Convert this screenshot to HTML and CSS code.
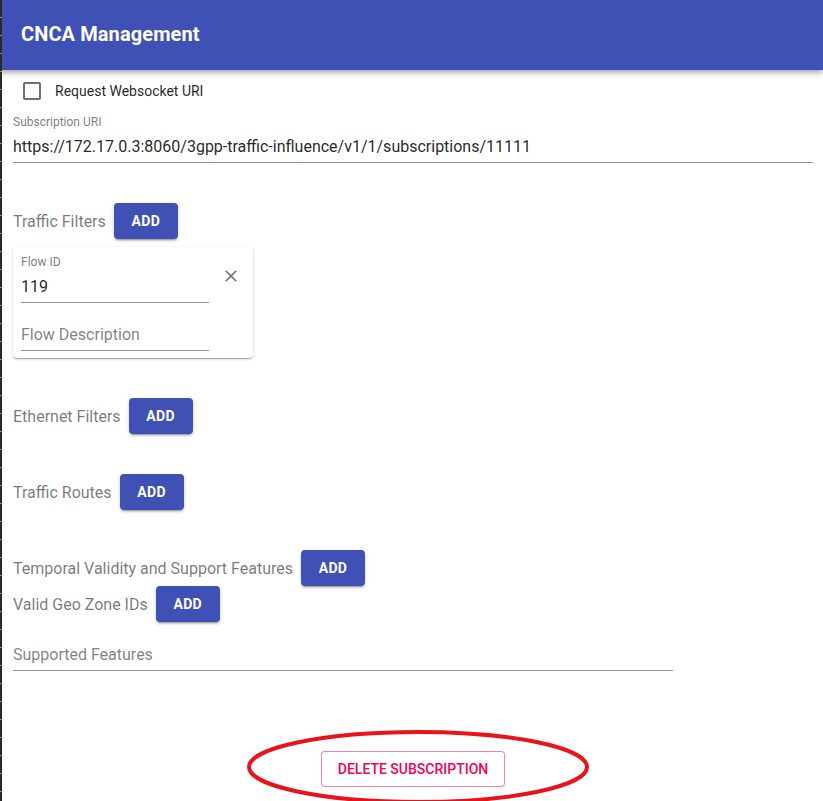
FILE: index.html
```html
<!DOCTYPE html>
<html>
<head>
<meta charset="utf-8">
<link rel="stylesheet" href="styles.css">
</head>
<body>
<div class="edge"></div>
<header class="appbar"><h1 class="title">CNCA Management</h1></header>
<main class="content">
  <label class="check-row">
    <span class="checkbox"></span>
    <span class="check-label">Request Websocket URI</span>
  </label>
  <div class="field field-full">
    <div class="field-label">Subscription URI</div>
    <div class="field-input">https://172.17.0.3:8060/3gpp-traffic-influence/v1/1/subscriptions/11111</div>
  </div>

  <div class="section-row first">
    <span class="section-label">Traffic Filters</span>
    <button class="btn-add">ADD</button>
  </div>
  <div class="card">
    <div class="card-fields">
      <div class="field field-card">
        <div class="field-label">Flow ID</div>
        <div class="field-input">119</div>
      </div>
      <div class="field field-card no-label card-desc">
        <div class="field-input placeholder">Flow Description</div>
      </div>
    </div>
    <svg class="close" viewBox="0 0 24 24" width="20" height="20"><path fill="#757575" d="M19 6.41 17.59 5 12 10.59 6.41 5 5 6.41 10.59 12 5 17.59 6.41 19 12 13.41 17.59 19 19 17.59 13.41 12z"/></svg>
  </div>

  <div class="section-row spaced">
    <span class="section-label">Ethernet Filters</span>
    <button class="btn-add">ADD</button>
  </div>
  <div class="section-row spaced">
    <span class="section-label">Traffic Routes</span>
    <button class="btn-add">ADD</button>
  </div>
  <div class="section-row spaced">
    <span class="section-label">Temporal Validity and Support Features</span>
    <button class="btn-add">ADD</button>
  </div>
  <div class="section-row">
    <span class="section-label">Valid Geo Zone IDs</span>
    <button class="btn-add">ADD</button>
  </div>
  <div class="field field-features no-label">
    <div class="field-input placeholder">Supported Features</div>
  </div>

  <div class="actions">
    <button class="btn-delete">DELETE SUBSCRIPTION</button>
  </div>
</main>
<svg class="ellipse" width="823" height="801" viewBox="0 0 823 801"><ellipse cx="418" cy="767" rx="169" ry="35" fill="none" stroke="#e8141b" stroke-width="4"/></svg>
</body>
</html>
```

FILE: styles.css
```css
* { box-sizing: border-box; }
html, body { margin: 0; padding: 0; }
body {
  width: 823px;
  height: 801px;
  overflow: hidden;
  background: #fff;
  font-family: Roboto, "Liberation Sans", sans-serif;
  color: rgba(0,0,0,0.87);
}
.edge {
  position: absolute;
  left: 0; top: 0;
  width: 2px; height: 801px;
  z-index: 5;
  background: repeating-linear-gradient(to bottom, #2a2a2a 0, #2a2a2a 17px, #8a8a8a 17px, #8a8a8a 18px);
}
.appbar {
  height: 70px;
  background: #3f51b5;
  display: flex;
  align-items: center;
  padding: 0 21px;
  box-shadow: 0 2px 4px -1px rgba(0,0,0,0.2), 0 4px 5px 0 rgba(0,0,0,0.14), 0 1px 10px 0 rgba(0,0,0,0.12);
  position: relative;
  z-index: 2;
}
.title {
  margin: 0;
  color: #fff;
  font-size: 20px;
  font-weight: 700;
  line-height: 1;
  letter-spacing: 0.1px;
  padding-bottom: 2px;
}
.content {
  padding: 0 10px 0 13px;
}
.check-row {
  display: flex;
  align-items: center;
  padding-top: 12px;
  height: 29px;
  padding-left: 10px;
}
.checkbox {
  width: 18px; height: 18px;
  border: 2px solid #707070;
  border-radius: 2px;
  flex: none;
}
.check-label {
  margin-left: 14px;
  font-size: 14px;
  line-height: 18px;
  color: rgba(0,0,0,0.87);
}
.field { display: flex; flex-direction: column; }
.field-label {
  font-size: 12px;
  line-height: 14px;
  color: rgba(0,0,0,0.54);
}
.field-input {
  font-size: 16px;
  line-height: 19px;
  padding: 6px 0 7px;
  border-bottom: 1px solid #949494;
  white-space: nowrap;
}
.placeholder { color: rgba(0,0,0,0.5); }
.field-full { margin-top: 16px; width: 800px; }
.field-full .field-input { padding-top: 8px; padding-bottom: 6px; }
.section-row {
  display: flex;
  align-items: center;
  height: 36px;
}
.section-row.first { margin-top: 40px; }
.section-row.spaced { margin-top: 40px; }
.section-label {
  font-size: 16px;
  color: rgba(0,0,0,0.54);
  margin-right: 8px;
}
.btn-add {
  width: 64px;
  height: 36px;
  border: 0;
  border-radius: 4px;
  background: #3f51b5;
  color: #fff;
  font-family: Roboto, "Liberation Sans", sans-serif;
  font-size: 14px;
  font-weight: 700;
  letter-spacing: 0.3px;
  box-shadow: 0 3px 1px -2px rgba(0,0,0,0.2), 0 2px 2px 0 rgba(0,0,0,0.14), 0 1px 5px 0 rgba(0,0,0,0.12);
  padding: 0;
}
.card {
  margin-top: 8px;
  width: 240px;
  height: 111px;
  border-radius: 4px;
  background: #fff;
  box-shadow: 0 1px 3px 0 rgba(0,0,0,0.2), 0 1px 1px 0 rgba(0,0,0,0.14), 0 2px 1px -1px rgba(0,0,0,0.12);
  display: flex;
  padding: 8px 0 0 8px;
}
.card-fields { width: 188px; }
.field-card .field-input { padding-top: 8px; padding-bottom: 6px; }
.no-label { padding-top: 16px; }
.card-desc { padding-top: 16px; }
.card-desc .field-input { padding-top: 6px; padding-bottom: 6px; }
.close { margin: 11px 0 0 12px; flex: none; }
.field-features { width: 660px; padding-top: 17px; }
.field-features .field-input { padding-bottom: 6px; }
.actions {
  display: flex;
  justify-content: center;
  margin-top: 80px;
  width: 800px;
}
.btn-delete {
  width: 184px;
  height: 36px;
  background: #fff;
  border: 1px solid rgba(245,0,87,0.5);
  border-radius: 4px;
  color: #f50057;
  font-family: Roboto, "Liberation Sans", sans-serif;
  font-size: 14px;
  font-weight: 500;
  padding: 0;
}
.ellipse {
  position: absolute;
  left: 0; top: 0;
  pointer-events: none;
  z-index: 4;
}
```
